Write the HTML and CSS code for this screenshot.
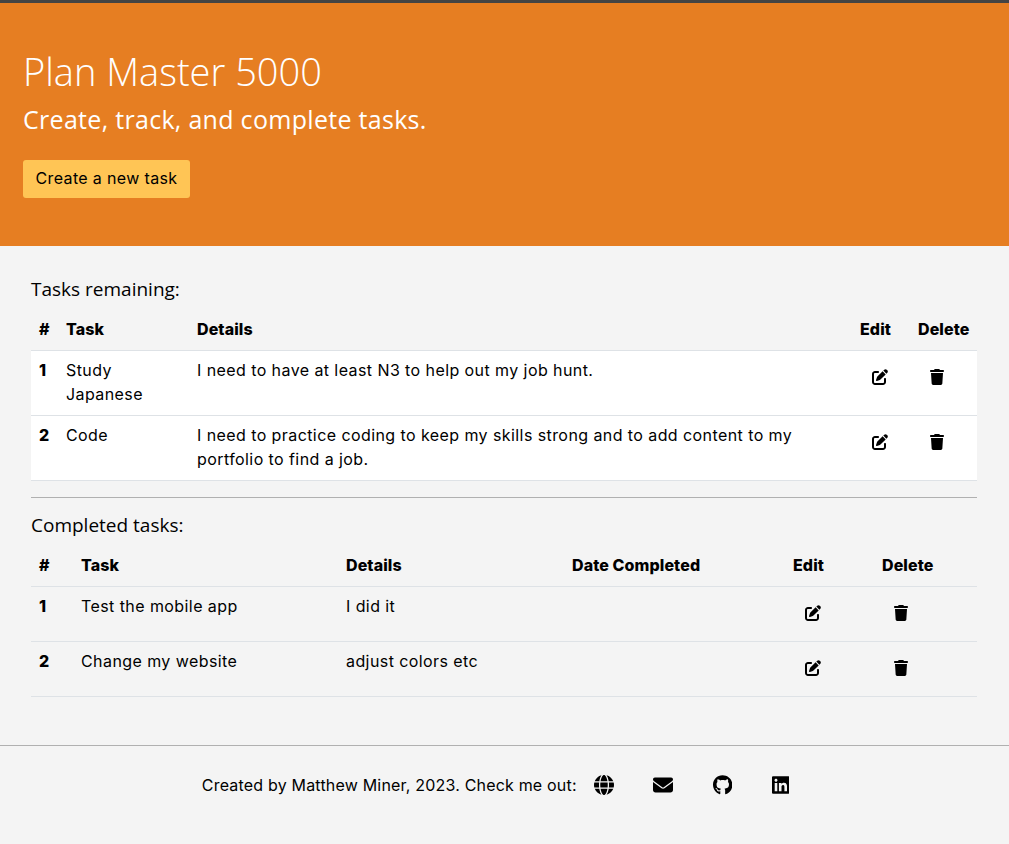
FILE: index.html
```html
<!DOCTYPE html>
<html lang="en">
<head>
    <meta charset="UTF-8">
    <meta name="viewport" content="width=device-width, initial-scale=1.0">
    <title>Plan Master 5000</title>
    <link rel="stylesheet" href="styles.css">
</head>
<body>
    <svg class="icon-defs" aria-hidden="true">
        <symbol id="icon-edit" viewBox="0 0 512 512"><path d="M471.6 21.7c-21.9-21.9-57.3-21.9-79.2 0L362.3 51.7l97.9 97.9 30.1-30.1c21.9-21.9 21.9-57.3 0-79.2L471.6 21.7zm-299.2 220c-6.1 6.1-10.8 13.6-13.5 21.9l-29.6 88.8c-2.9 8.6-.6 18.1 5.8 24.6s15.9 8.7 24.6 5.8l88.8-29.6c8.2-2.7 15.7-7.4 21.9-13.5L437.7 172.3 339.7 74.3 172.4 241.7zM96 64C43 64 0 107 0 160V416c0 53 43 96 96 96H352c53 0 96-43 96-96V320c0-17.7-14.3-32-32-32s-32 14.3-32 32v96c0 17.7-14.3 32-32 32H96c-17.7 0-32-14.3-32-32V160c0-17.7 14.3-32 32-32h96c17.7 0 32-14.3 32-32s-14.3-32-32-32H96z"/></symbol>
        <symbol id="icon-trash" viewBox="0 0 448 512"><path d="M135.2 17.7L128 32H32C14.3 32 0 46.3 0 64S14.3 96 32 96H416c17.7 0 32-14.3 32-32s-14.3-32-32-32H320l-7.2-14.3C307.4 6.8 296.3 0 284.2 0H163.8c-12.1 0-23.2 6.8-28.6 17.7zM416 128H32L53.2 467c1.6 25.3 22.6 45 47.9 45H346.9c25.3 0 46.3-19.7 47.9-45L416 128z"/></symbol>
        <symbol id="icon-globe" viewBox="0 0 512 512"><path d="M352 256c0 22.2-1.2 43.6-3.3 64H163.3c-2.2-20.4-3.3-41.8-3.3-64s1.2-43.6 3.3-64H348.7c2.2 20.4 3.3 41.8 3.3 64zm28.8-64H503.9c5.3 20.5 8.1 41.9 8.1 64s-2.8 43.5-8.1 64H380.8c2.1-20.6 3.2-42 3.2-64s-1.1-43.4-3.2-64zm112.6-32H376.7c-10-63.9-29.8-117.4-55.3-151.6c78.3 20.7 142 77.5 171.9 151.6zm-149.1 0H167.7c6.1-36.4 15.5-68.6 27-94.7c10.5-23.6 22.2-40.7 33.5-51.5C239.4 3.2 248.7 0 256 0s16.6 3.2 27.8 13.8c11.3 10.8 23 27.9 33.5 51.5c11.6 26 20.9 58.2 27 94.7zm-209 0H18.6C48.6 85.9 112.2 29.1 190.6 8.4C165.1 42.6 145.3 96.1 135.3 160zM8.1 192H131.2c-2.1 20.6-3.2 42-3.2 64s1.1 43.4 3.2 64H8.1C2.8 299.5 0 278.1 0 256s2.8-43.5 8.1-64zM194.7 446.6c-11.6-26-20.9-58.2-27-94.6H344.3c-6.1 36.4-15.5 68.6-27 94.6c-10.5 23.6-22.2 40.7-33.5 51.5C272.6 508.8 263.3 512 256 512s-16.6-3.2-27.8-13.8c-11.3-10.8-23-27.9-33.5-51.5zM135.3 352c10 63.9 29.8 117.4 55.3 151.6C112.2 482.9 48.6 426.1 18.6 352H135.3zm358.1 0c-30 74.1-93.6 130.9-171.9 151.6c25.5-34.2 45.2-87.7 55.3-151.6H493.4z"/></symbol>
        <symbol id="icon-envelope" viewBox="0 0 512 512"><path d="M48 64C21.5 64 0 85.5 0 112c0 15.1 7.1 29.3 19.2 38.4L236.8 313.6c11.4 8.5 27 8.5 38.4 0L492.8 150.4c12.1-9.1 19.2-23.3 19.2-38.4c0-26.5-21.5-48-48-48H48zM0 176V384c0 35.3 28.7 64 64 64H448c35.3 0 64-28.7 64-64V176L294.4 339.2c-22.8 17.1-54 17.1-76.8 0L0 176z"/></symbol>
        <symbol id="icon-github" viewBox="0 0 496 512"><path d="M165.9 397.4c0 2-2.3 3.6-5.2 3.6-3.3 0-5.6-1.6-5.6-3.6 0-2 2.3-3.6 5.2-3.6 3-.3 5.6 1.3 5.6 3.6zm-31.1-4.5c-.7 2 1.3 4.3 4.3 4.9 2.6 1 5.6 0 6.2-2s-1.3-4.3-4.3-5.2c-2.6-.7-5.5.3-6.2 2.3zm44.2-1.7c-2.9.7-4.9 2.6-4.6 4.9.3 2 2.9 3.3 5.9 2.6 2.9-.7 4.9-2.6 4.6-4.6-.3-1.9-3-3.2-5.9-2.9zM244.8 8C106.1 8 0 113.3 0 252c0 110.9 69.8 205.8 169.5 239.2 12.8 2.3 17.3-5.6 17.3-12.1 0-6.2-.3-40.4-.3-61.4 0 0-70 15-84.7-29.8 0 0-11.4-29.1-27.8-36.6 0 0-22.9-15.7 1.6-15.4 0 0 24.9 2 38.6 25.8 21.9 38.6 58.6 27.5 72.9 20.9 2.3-16 8.8-27.1 16-33.7-55.9-6.2-112.3-14.3-112.3-110.5 0-27.5 7.6-41.3 23.6-58.9-2.6-6.5-11.1-33.3 2.6-67.9 20.9-6.5 69 27 69 27 20-5.6 41.5-8.5 62.8-8.5s42.8 2.9 62.8 8.5c0 0 48.1-33.6 69-27 13.7 34.7 5.2 61.4 2.6 67.9 16 17.7 25.8 31.5 25.8 58.9 0 96.5-58.9 104.2-114.8 110.5 9.2 7.9 17 22.9 17 46.4 0 33.7-.3 75.4-.3 83.6 0 6.5 4.6 14.4 17.3 12.1C428.2 457.8 496 362.9 496 252 496 113.3 383.5 8 244.8 8z"/></symbol>
        <symbol id="icon-linkedin" viewBox="0 0 448 512"><path d="M416 32H31.9C14.3 32 0 46.5 0 64.3v383.4C0 465.5 14.3 480 31.9 480H416c17.6 0 32-14.5 32-32.3V64.3c0-17.8-14.4-32.3-32-32.3zM135.4 416H69V202.2h66.5V416zm-33.2-243c-21.3 0-38.5-17.3-38.5-38.5S80.9 96 102.2 96c21.2 0 38.5 17.3 38.5 38.5 0 21.3-17.2 38.5-38.5 38.5zm282.1 243h-66.4V312c0-24.8-.5-56.7-34.5-56.7-34.6 0-39.9 27-39.9 54.9V416h-66.4V202.2h63.7v29.2h.9c8.9-16.8 30.6-34.5 62.9-34.5 67.2 0 79.7 44.3 79.7 101.9V416z"/></symbol>
    </svg>

    <header class="hero">
        <h1>Plan Master 5000</h1>
        <p class="lead">Create, track, and complete tasks.</p>
        <a class="new-task" href="#">Create a new task</a>
    </header>

    <main class="content">
        <h2>Tasks remaining:</h2>
        <table class="tasks remaining">
            <colgroup>
                <col class="r-num"><col class="r-task"><col class="r-details"><col class="r-edit"><col class="r-delete">
            </colgroup>
            <thead>
                <tr><th>#</th><th>Task</th><th>Details</th><th>Edit</th><th>Delete</th></tr>
            </thead>
            <tbody>
                <tr>
                    <th>1</th>
                    <td>Study Japanese</td>
                    <td>I need to have at least N3 to help out my job hunt.</td>
                    <td><a class="row-btn" href="#"><svg class="icon-edit"><use href="#icon-edit"/></svg></a></td>
                    <td><a class="row-btn" href="#"><svg class="icon-trash"><use href="#icon-trash"/></svg></a></td>
                </tr>
                <tr>
                    <th>2</th>
                    <td>Code</td>
                    <td>I need to practice coding to keep my skills strong and to add content to my portfolio to find a job.</td>
                    <td><a class="row-btn" href="#"><svg class="icon-edit"><use href="#icon-edit"/></svg></a></td>
                    <td><a class="row-btn" href="#"><svg class="icon-trash"><use href="#icon-trash"/></svg></a></td>
                </tr>
            </tbody>
        </table>

        <hr class="divider">

        <h2>Completed tasks:</h2>
        <table class="tasks completed">
            <colgroup>
                <col class="c-num"><col class="c-task"><col class="c-details"><col class="c-date"><col class="c-edit"><col class="c-delete">
            </colgroup>
            <thead>
                <tr><th>#</th><th>Task</th><th>Details</th><th>Date Completed</th><th>Edit</th><th>Delete</th></tr>
            </thead>
            <tbody>
                <tr>
                    <th>1</th>
                    <td>Test the mobile app</td>
                    <td>I did it</td>
                    <td></td>
                    <td><a class="row-btn" href="#"><svg class="icon-edit"><use href="#icon-edit"/></svg></a></td>
                    <td><a class="row-btn" href="#"><svg class="icon-trash"><use href="#icon-trash"/></svg></a></td>
                </tr>
                <tr>
                    <th>2</th>
                    <td>Change my website</td>
                    <td>adjust colors etc</td>
                    <td></td>
                    <td><a class="row-btn" href="#"><svg class="icon-edit"><use href="#icon-edit"/></svg></a></td>
                    <td><a class="row-btn" href="#"><svg class="icon-trash"><use href="#icon-trash"/></svg></a></td>
                </tr>
            </tbody>
        </table>
    </main>

    <footer class="site-footer">
        <span>Created by Matthew Miner, 2023. Check me out:</span>
        <a href="#"><svg class="icon-social"><use href="#icon-globe"/></svg></a>
        <a href="#"><svg class="icon-social"><use href="#icon-envelope"/></svg></a>
        <a href="#"><svg class="icon-social icon-github"><use href="#icon-github"/></svg></a>
        <a href="#"><svg class="icon-social icon-linkedin"><use href="#icon-linkedin"/></svg></a>
    </footer>
</body>
</html>
```

FILE: styles.css
```css
* {
    box-sizing: border-box;
}

body {
    margin: 0;
    background-color: #f4f4f4;
    color: #000;
    font-family: 'Inter', 'Liberation Sans', sans-serif;
    font-size: 16px;
    letter-spacing: 0.42px;
    line-height: 24px;
    border-top: 3px solid #444;
    min-height: 841px;
}

.icon-defs {
    display: none;
}

a {
    color: #000;
    text-decoration: none;
}

.hero {
    background-color: #e67e22;
    color: #fff;
    height: 243px;
    padding: 44px 23px 0;
    font-family: 'Open Sans', 'Noto Sans', sans-serif;
    letter-spacing: 0;
}

.hero h1 {
    margin: 0 0 8px;
    font-size: 38px;
    line-height: 48px;
    font-weight: 350;
}

.lead {
    margin: 0 0 25px;
    font-size: 25px;
    letter-spacing: 0.3px;
    line-height: 32px;
    font-weight: 400;
}

.new-task {
    display: inline-block;
    width: 167px;
    height: 38px;
    line-height: 37px;
    text-align: center;
    background-color: #ffc555;
    border-radius: 3px;
    font-family: 'Inter', 'Liberation Sans', sans-serif;
    letter-spacing: 0.35px;
}

.content {
    padding: 32px 32px 48px 31px;
}

h2 {
    margin: 0 0 10px;
    font-family: 'Open Sans', 'Noto Sans', sans-serif;
    font-size: 19px;
    line-height: 22px;
    font-weight: 400;
    letter-spacing: 0;
}

.tasks {
    width: 100%;
    table-layout: fixed;
    border-collapse: separate;
    border-spacing: 0;
}

.tasks th,
.tasks td {
    padding: 7px 8px 9px;
    text-align: left;
    vertical-align: top;
    border-bottom: 1px solid #dee2e6;
}

.tasks th {
    font-weight: 800;
    letter-spacing: 0.1px;
}

.remaining tbody {
    background-color: #fff;
}

.r-num { width: 27px; }
.r-task { width: 131px; }
.r-edit { width: 58px; }
.r-delete { width: 67px; }

.c-num { width: 42px; }
.c-task { width: 265px; }
.c-details { width: 226px; }
.c-date { width: 221px; }
.c-edit { width: 89px; }

.row-btn {
    display: inline-block;
    height: 38px;
    padding: 6px 12px;
    vertical-align: top;
}

.row-btn svg {
    display: block;
    margin-top: 5px;
    height: 16px;
}

.icon-edit {
    width: 16px;
}

.icon-trash {
    width: 14px;
}

.divider {
    margin: 16px 0;
    border: 0;
    border-top: 1px solid #b0b0b0;
}

.site-footer {
    display: flex;
    justify-content: center;
    align-items: center;
    gap: 39.5px;
    height: 79px;
    padding-right: 18px;
    border-top: 1px solid #b0b0b0;
    letter-spacing: 0.19px;
}

.site-footer span {
    margin-right: -22.5px;
}

.site-footer a {
    display: flex;
}

.icon-social {
    width: 20px;
    height: 20px;
}

.icon-github {
    width: 19.4px;
}

.icon-linkedin {
    width: 17.5px;
}
```
